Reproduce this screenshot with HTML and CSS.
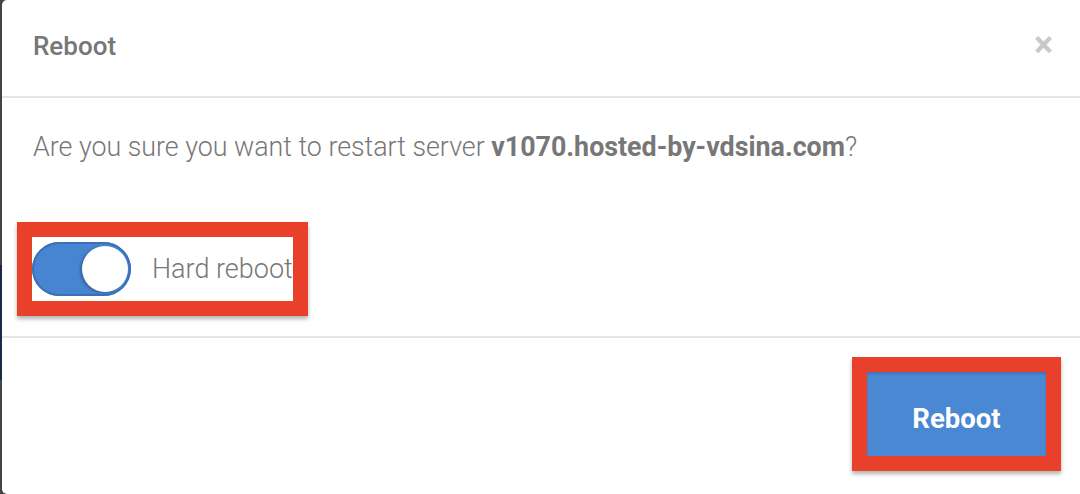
FILE: index.html
```html
<!DOCTYPE html>
<html>
<head>
<meta charset="utf-8">
<link rel="stylesheet" href="styles.css">
</head>
<body>
<div class="modal">
  <div class="modal-header">
    <h1 class="title">Reboot</h1>
    <span class="close">&times;</span>
  </div>
  <div class="modal-body">
    <p class="question">Are you sure you want to restart server <b>v1070.hosted-by-vdsina.com</b>?</p>
    <div class="mark mark-toggle">
      <label class="toggle-row">
        <span class="switch"><span class="knob"></span></span>
        <span class="toggle-label">Hard reboot</span>
      </label>
    </div>
  </div>
  <div class="modal-footer">
    <div class="mark mark-btn">
      <button class="btn">Reboot</button>
    </div>
  </div>
</div>
</body>
</html>
```

FILE: styles.css
```css
html, body {
  margin: 0;
  padding: 0;
  height: 100%;
}
body {
  background: linear-gradient(to bottom, #444 0, #444 265px, #1a2a44 265px, #1a2a44 380px, #444 380px);
  font-family: Roboto, "Liberation Sans", sans-serif;
  overflow: hidden;
}
.modal {
  margin-left: 2px;
  height: 494px;
  background: #fff;
  border-top-left-radius: 5px;
  border-bottom-left-radius: 5px;
  color: #777;
}
.modal-header {
  height: 98px;
  border-bottom: 2px solid #e5e5e5;
  display: flex;
  align-items: center;
  justify-content: space-between;
  padding: 0 27px 0 31px;
  box-sizing: border-box;
}
.title {
  margin: 0;
  font-size: 26px;
  font-weight: 500;
  color: #777;
  padding-bottom: 4px;
}
.close {
  font-size: 36px;
  font-weight: 700;
  color: #c9c9c9;
  line-height: 1;
  padding-bottom: 6px;
}
.modal-body {
  height: 240px;
  border-bottom: 2px solid #e5e5e5;
  padding: 30px 0 0 15px;
  box-sizing: border-box;
  display: flex;
  flex-direction: column;
  align-items: flex-start;
}
.question {
  margin: 0 0 0 16px;
  font-size: 26.8px;
  font-weight: 300;
  line-height: 38px;
}
.question b {
  font-weight: 700;
}
.mark {
  border: 15px solid #e8402a;
  box-shadow: 0 3px 4px rgba(0,0,0,0.3);
  background: #fff;
}
.mark-toggle {
  margin-top: 56px;
  height: 64px;
}
.toggle-row {
  display: flex;
  align-items: center;
  height: 64px;
  gap: 21px;
}
.switch {
  width: 99px;
  height: 54px;
  border-radius: 27px;
  background: #4785d2;
  box-shadow: inset 0 0 0 2px #3c70b6;
  position: relative;
  flex: none;
}
.knob {
  position: absolute;
  right: 3px;
  top: 4px;
  width: 46px;
  height: 46px;
  border-radius: 50%;
  background: #fff;
  box-shadow: -2px 1px 3px rgba(0,0,0,0.25);
}
.toggle-label {
  font-size: 27px;
  font-weight: 300;
  color: #777;
  white-space: nowrap;
}
.modal-footer {
  display: flex;
  justify-content: flex-end;
  padding: 19px 19px 0 0;
}
.btn {
  display: block;
  width: 179px;
  height: 84px;
  border: none;
  background: #4a88d3;
  color: #fff;
  font-family: Roboto, "Liberation Sans", sans-serif;
  font-size: 27.5px;
  font-weight: 700;
  padding: 8px 0 0 0;
  box-shadow: inset 0 2px 2px rgba(0,0,0,0.15);
}
```
